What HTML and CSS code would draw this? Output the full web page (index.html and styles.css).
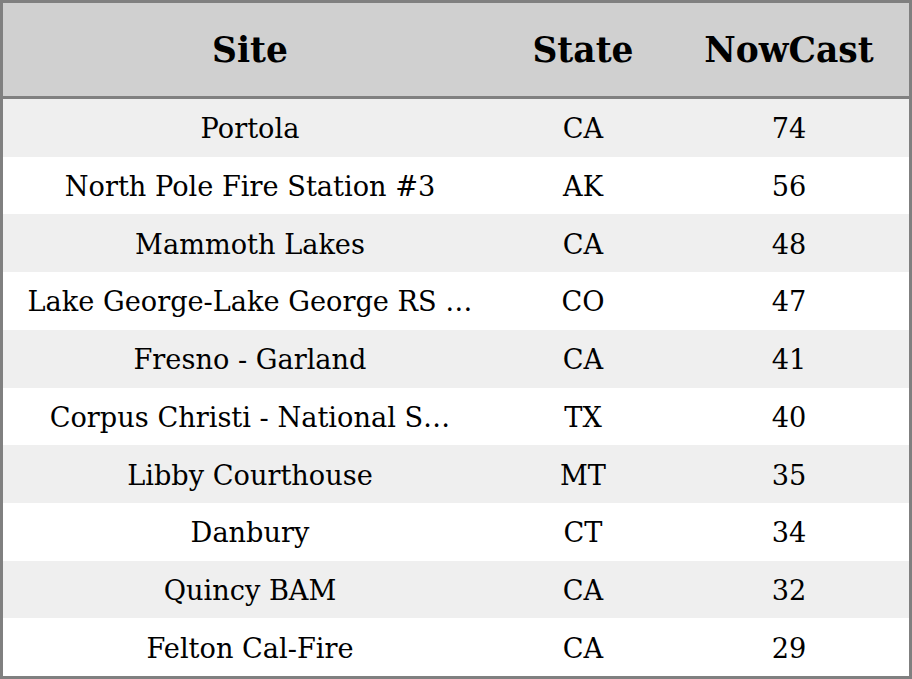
FILE: index.html
```html
<!DOCTYPE html>
<html>
<head>
<meta charset="utf-8">
<link rel="stylesheet" href="styles.css">
</head>
<body>
<div class="table">
  <div class="row head"><div class="c site">Site</div><div class="c">State</div><div class="c">NowCast</div></div>
  <div class="row"><div class="c site">Portola</div><div class="c">CA</div><div class="c">74</div></div>
  <div class="row"><div class="c site">North Pole Fire Station #3</div><div class="c">AK</div><div class="c">56</div></div>
  <div class="row"><div class="c site">Mammoth Lakes</div><div class="c">CA</div><div class="c">48</div></div>
  <div class="row"><div class="c site">Lake George-Lake George RS …</div><div class="c">CO</div><div class="c">47</div></div>
  <div class="row"><div class="c site">Fresno - Garland</div><div class="c">CA</div><div class="c">41</div></div>
  <div class="row"><div class="c site">Corpus Christi - National S…</div><div class="c">TX</div><div class="c">40</div></div>
  <div class="row"><div class="c site">Libby Courthouse</div><div class="c">MT</div><div class="c">35</div></div>
  <div class="row"><div class="c site">Danbury</div><div class="c">CT</div><div class="c">34</div></div>
  <div class="row"><div class="c site">Quincy BAM</div><div class="c">CA</div><div class="c">32</div></div>
  <div class="row"><div class="c site">Felton Cal-Fire</div><div class="c">CA</div><div class="c">29</div></div>
</div>
</body>
</html>
```
FILE: styles.css
```css
html, body {
  margin: 0;
  padding: 0;
  background: #ffffff;
}
.table {
  box-sizing: border-box;
  width: 912px;
  height: 679px;
  border: 3px solid #808080;
  display: grid;
  grid-template-rows: 96px repeat(10, 1fr);
  font-family: "DejaVu Serif", serif;
  color: #000;
}
.row {
  display: grid;
  grid-template-columns: 494px 172px 240px;
  align-items: center;
  font-size: 27.2px;
  padding-top: 2px;
}
.row:nth-child(even) {
  background: #efefef;
}
.row.head {
  background: #d0d0d0;
  border-bottom: 3px solid #808080;
  font-weight: bold;
  font-size: 34.5px;
  padding-top: 0;
}
.c {
  text-align: center;
  white-space: nowrap;
  overflow: hidden;
}
```
